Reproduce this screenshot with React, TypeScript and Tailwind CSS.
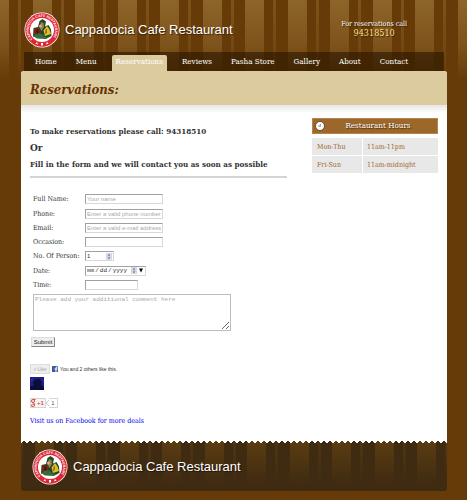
import React from "react";

const navItems = ["Home", "Menu", "Reservations", "Reviews", "Pasha Store", "Gallery", "About", "Contact"];

const field =
  "block h-[10px] rounded-none border border-[#d8d8d8] border-t-[#a0a0a0] border-l-[#a0a0a0] bg-white px-px font-['Liberation_Sans',Arial,sans-serif] text-[6px] leading-[8px] text-[#333] outline-none placeholder:text-[#a9a9a9]";

function Logo({ id }: { id: string }) {
  return (
    <svg viewBox="0 0 72 72" className="size-9 shrink-0" aria-hidden="true">
      <defs>
        <path id={id} d="M16.9 54.1 A26.3 26.3 0 1 1 55.1 54.1" />
      </defs>
      <circle cx="36" cy="36" r="35" fill="#fff" />
      <circle cx="36" cy="36" r="33.5" fill="#df2634" />
      <circle cx="36" cy="36" r="24" fill="#fff" />
      <text fontSize="7" fontWeight="bold" fill="#fff" fontFamily="Liberation Sans">
        <textPath href={"#" + id}>CAPPADOCIA CAFE RESTAURANT</textPath>
      </text>
      <path d="M26 60l2 5-5-2zM34 62h4v5h-4zM46 60l3 3-5 2z" fill="#fff" />
      <path d="M18 49 L19 32 L28 30 L31 18 L37 14 L44 19 L42 29 L49 26 L54 35 L55 48 L43 53 Z" fill="#24462a" />
      <path d="M31 31 L34 20 L39 22 L40 30 L35 38 Z" fill="#97804a" />
      <path d="M20 32 L31 33 L33 43 L20 46 Z" fill="#7c211a" />
      <path d="M25 36 L28 35 L29 42 L25 43 Z" fill="#281d15" />
      <path d="M39 37 L46 28 L51 35 L54 44 L42 48 Z" fill="#e5bd24" />
      <path d="M43 36 L46 33 L46 42 L42 44 Z" fill="#8a7221" />
      <path d="M18 48 Q30 38 38 46 T55 48 L44 54 L26 53 Z" fill="#346c3b" />
      <circle cx="33" cy="28" r="3" fill="#d8b07c" />
    </svg>
  );
}

function Spinner() {
  return (
    <svg viewBox="0 0 12 14" className="h-[7px] w-[6px] shrink-0" aria-hidden="true">
      <rect x=".5" y=".5" width="11" height="6" rx="1" fill="#e4e7f1" stroke="#aeb6cd" />
      <rect x=".5" y="7.5" width="11" height="6" rx="1" fill="#e4e7f1" stroke="#aeb6cd" />
      <path d="M3 5 L6 2 L9 5 Z M3 9 L6 12 L9 9 Z" fill="#49577e" />
    </svg>
  );
}

function Row({ id, label, tall, children }: { id: string; label: string; tall?: boolean; children: React.ReactNode }) {
  return (
    <div className={"flex items-center " + (tall ? "h-[15px]" : "h-[14px]")}>
      <label htmlFor={id} className="w-[52px] whitespace-nowrap text-[7px] leading-[10px] text-[#333]">
        {label}
      </label>
      {children}
    </div>
  );
}

export default function App() {
  return (
    <div className="min-h-screen bg-[#663b08] bg-[linear-gradient(180deg,rgba(102,59,8,0)_0px,rgba(102,59,8,0.4)_45px,#663b08_80px),repeating-linear-gradient(90deg,#8d6429_0px_9px,#663b08_9px_18px,#7d531b_18px_21px,#663b08_21px_33px,#8d6429_33px_52px,#663b08_52px_61px,#7d531b_61px_64px,#663b08_64px_75px,#8d6429_75px_85px)] pr-5 pb-[9px] pl-[21px] font-['DejaVu_Serif_Condensed','DejaVu_Serif','Liberation_Serif',serif]">
      <header>
        <div className="flex h-[52px] items-start justify-between pt-3 pr-10 pl-[3px]">
          <div className="flex items-center">
            <Logo id="header-ring" />
            <span className="pl-[5px] font-['Liberation_Sans',Arial,sans-serif] text-[13px] leading-4 whitespace-nowrap text-white [text-shadow:1px_1px_1px_#3a2205]">
              Cappadocia Cafe Restaurant
            </span>
          </div>
          <div className="pt-[7px] text-center whitespace-nowrap [text-shadow:1px_1px_1px_#3a2205]">
            <p className="text-[7px] leading-[10px] text-white">For reservations call</p>
            <p className="text-[9px] leading-[9px] text-[#ffe08a]">94318510</p>
          </div>
        </div>
        <nav className="mx-[3px] flex h-[19px] items-end gap-[11px] bg-[#2e1a02]/65 pl-[7px]">
          {navItems.map((item) => (
            <a
              key={item}
              href="#"
              className={
                "h-4 rounded-t-[2px] px-1 text-[8px] leading-[13px] whitespace-nowrap text-white " +
                (item === "Reservations" ? "bg-[#dccb9f]" : "")
              }
            >
              {item}
            </a>
          ))}
        </nav>
      </header>

      <main className="rounded-t-[3px] bg-white">
        <h1 className="flex h-[34px] items-center rounded-t-[3px] bg-[#dccb9f] pt-[3px] pl-[9px] text-[13px] font-bold text-[#663300] italic">
          Reservations:
        </h1>
        <div className="flex h-[336px] items-start justify-between bg-linear-to-b from-[#e6e6e6] to-white to-[8px] pt-[13px] pr-[9px] pl-[9px]">
          <div className="w-[257px] shrink-0">
            <h2 className="pt-[7px] text-[8px] leading-[12px] font-bold whitespace-nowrap text-[#333]">
              To make reservations please call: 94318510
            </h2>
            <h2 className="pt-1 text-[10px] leading-[14px] font-bold text-[#333]">Or</h2>
            <h2 className="pt-[3px] text-[8px] leading-[12px] font-bold whitespace-nowrap text-[#333]">
              Fill in the form and we will contact you as soon as possible
            </h2>
            <hr className="mt-[6px] border-t-2 border-[#d4d4d4]" />

            <form className="pt-[14px] pl-[3px]" onSubmit={(e) => e.preventDefault()}>
              <Row id="name" label="Full Name:">
                <input id="name" type="text" placeholder="Your name" className={field + " w-[78px]"} />
              </Row>
              <Row id="phone" label="Phone:" tall>
                <input id="phone" type="tel" placeholder="Enter a valid phone number" className={field + " w-[78px]"} />
              </Row>
              <Row id="email" label="Email:">
                <input id="email" type="email" placeholder="Enter a valid e-mail address" className={field + " w-[78px]"} />
              </Row>
              <Row id="occasion" label="Occasion:">
                <input id="occasion" type="text" className={field + " w-[78px]"} />
              </Row>
              <Row id="persons" label="No. Of Person:">
                <div className="flex h-[10px] w-[29px] items-center border border-[#d8d8d8] border-t-[#a0a0a0] border-l-[#a0a0a0]">
                  <input
                    id="persons"
                    type="number"
                    defaultValue={1}
                    className="h-2 w-[20px] px-px font-['Liberation_Sans',Arial,sans-serif] text-[6px] leading-[8px] text-[#333] outline-none [appearance:textfield] [&::-webkit-inner-spin-button]:appearance-none"
                  />
                  <Spinner />
                </div>
              </Row>
              <Row id="date" label="Date:" tall>
                <div className="flex h-[10px] w-[61px] items-center border border-[#d8d8d8] border-t-[#a0a0a0] border-l-[#a0a0a0]">
                  <input
                    id="date"
                    type="date"
                    className="h-2 w-[45px] font-['Liberation_Mono',monospace] text-[6px] leading-[8px] text-[#333] outline-none [&::-webkit-calendar-picker-indicator]:hidden [&::-webkit-datetime-edit]:p-0"
                  />
                  <Spinner />
                  <svg viewBox="0 0 8 10" className="ml-[2px] h-[5px] w-1" aria-hidden="true">
                    <path d="M0 1 H8 L4 9 Z" fill="#000" />
                  </svg>
                </div>
              </Row>
              <Row id="time" label="Time:">
                <input id="time" type="text" className={field + " w-[53px]"} />
              </Row>
              <textarea
                aria-label="Additional comment"
                placeholder="Please add your additional comment here"
                className="mt-[2px] block h-[37px] w-[198px] resize border border-[#bcbcbc] bg-white px-px py-px font-['Liberation_Mono',monospace] text-[6px] leading-[8px] outline-none placeholder:text-[#a9a9a9]"
              />
              <button
                type="submit"
                className="mt-[6px] -ml-[2px] block h-[10px] w-[24px] border border-[#ddd] border-r-[#888] border-b-[#888] bg-[#eee] text-center font-['Liberation_Sans',Arial,sans-serif] text-[6px] leading-[8px] text-[#222]"
              >
                Submit
              </button>
            </form>

            <div className="flex items-center pt-[17px] font-['Liberation_Sans',Arial,sans-serif] text-[5px] leading-[8px]">
              <button type="button" className="h-[10px] w-[20px] border border-[#ddd] bg-[#eee] text-[#aaa]">
                ✓Like
              </button>
              <svg viewBox="0 0 12 12" className="ml-[2px] size-[6px]" aria-hidden="true">
                <rect width="12" height="12" rx="1" fill="#3b5998" />
                <path d="M7 12V7H5V5h2V4q0-3 3-3h1v2h-1q-1 0-1 1v1h2v2H9v5z" fill="#fff" />
              </svg>
              <span className="pl-[2px] whitespace-nowrap text-[#333]">You and 2 others like this.</span>
            </div>
            <svg viewBox="0 0 28 26" className="mt-[3px] block h-[13px] w-[14px]" aria-hidden="true">
              <rect width="28" height="26" fill="#1b1b80" />
              <path d="M0 26V19l8-2-2-7 5-5 7-1 5 5-2 7 7 5v5z" fill="#0b0d36" />
              <path d="M0 4 7 1 4 12z M22 3l5 2v8z" fill="#2929a0" />
            </svg>
            <div className="flex items-center pt-2 font-['Liberation_Sans',Arial,sans-serif] leading-[8px]">
              <button type="button" className="flex h-[10px] w-4 items-center border border-[#d5d5d5] bg-[#f5f5f5] text-[6px] font-bold text-[#dd4b39]">
                <svg viewBox="0 0 10 16" className="h-2 w-[5px]" aria-hidden="true">
                  <path d="M9 1H4Q1 1 1 4t3 3 3-3-2-3M5 7l2 3q2 5-3 5-4 0-3-3 1-2 5-2" fill="none" stroke="#dd4b39" strokeWidth="2" />
                </svg>
                <span className="pl-px">+1</span>
              </button>
              <svg viewBox="0 0 3 6" className="h-[6px] w-[3px]" aria-hidden="true">
                <path d="M3 0 0 3 3 6" fill="#fff" stroke="#ccc" />
              </svg>
              <span className="h-[10px] w-[9px] border border-l-0 border-[#d5d5d5] text-center text-[6px] text-[#555]">1</span>
            </div>
            <a href="#" className="mt-2 block text-[7px] leading-[10px] whitespace-nowrap text-[#0000ee]">
              Visit us on Facebook for more deals
            </a>
          </div>

          <aside className="w-[126px] shrink-0">
            <h3 className="flex h-4 items-center border border-[#b5834b] bg-[#9c672b] pl-[2px] text-white">
              <svg viewBox="0 0 20 20" className="size-[10px]" aria-hidden="true">
                <circle cx="10" cy="10" r="9" fill="#fff" stroke="#4e2f0b" strokeWidth="1.5" />
                <path d="M11 6v5M11 10H7m2-2-2 2 2 2" fill="none" stroke="#888" strokeWidth="1.5" />
              </svg>
              <span className="flex-1 pr-[6px] text-center text-[8px] leading-[12px] whitespace-nowrap [text-shadow:1px_1px_1px_#4a2c08]">
                Restaurant Hours
              </span>
            </h3>
            <table className="mt-1 w-full border-separate border-spacing-0 text-left text-[7px] leading-[10px] text-[#9c672b]">
              <tbody>
                {[
                  ["Mon-Thu", "11am-11pm"],
                  ["Fri-Sun", "11am-midnight"],
                ].map(([days, hours]) => (
                  <tr key={days} className="h-[18px]">
                    <th className="w-[51px] border-r border-b border-white bg-[#e8e8e8] p-0 pl-[5px] font-normal">{days}</th>
                    <td className="border-b border-white bg-[#e8e8e8] p-0 pl-1 whitespace-nowrap">{hours}</td>
                  </tr>
                ))}
              </tbody>
            </table>
          </aside>
        </div>
      </main>

      <footer className="h-[50px] rounded-b-[3px] bg-[#3f2b12] bg-[linear-gradient(180deg,rgba(63,43,18,0)_0px,#3f2b12_44px),linear-gradient(90deg,#5a3c11_0px_9px,#3f2b12_9px_18px,#4f3511_18px_21px,#3f2b12_21px_33px,#5a3c11_33px_52px,#3f2b12_52px_61px,#4f3511_61px_64px,#3f2b12_64px_75px,#5a3c11_75px_85px)] bg-[size:100%_100%,85px_100%] bg-[position:0_0,-19px_0]">
        <div className="h-1 bg-[radial-gradient(ellipse_3px_4px_at_50%_100%,transparent_100%,#fff_100%)] bg-[size:6px_4px]" />
        <div className="flex items-center pt-1 pl-[11px]">
          <Logo id="footer-ring" />
          <span className="pl-[5px] font-['Liberation_Sans',Arial,sans-serif] text-[13px] leading-4 whitespace-nowrap text-white [text-shadow:1px_1px_1px_#1d1205]">
            Cappadocia Cafe Restaurant
          </span>
        </div>
      </footer>
    </div>
  );
}
